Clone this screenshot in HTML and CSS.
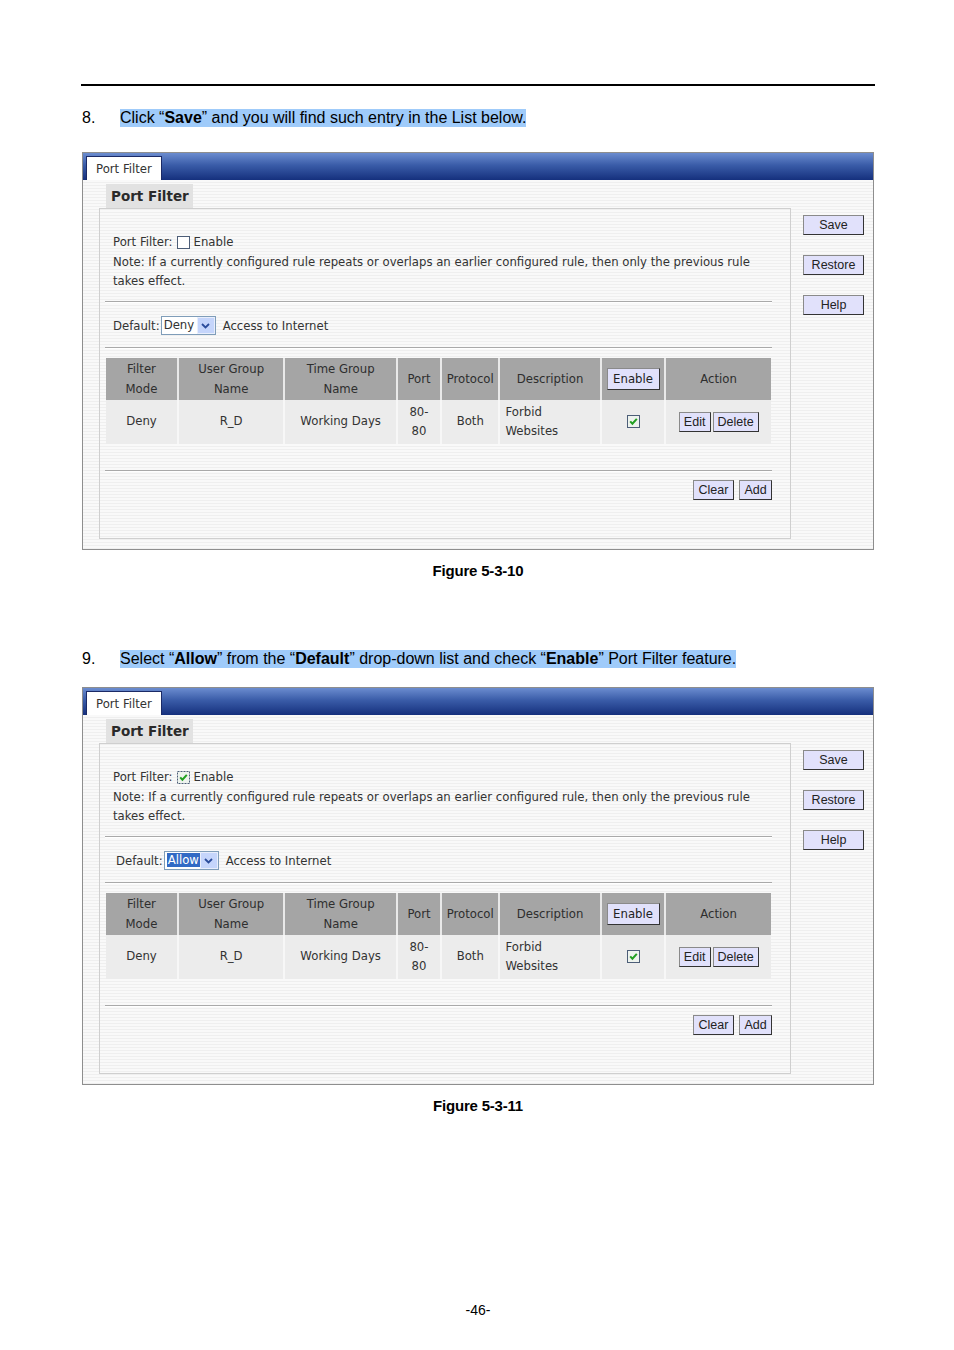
FILE: index.html
```html
<!DOCTYPE html>
<html lang="en">
<head>
  <meta charset="UTF-8" />
  <title>Port Filter - User Guide</title>
  <link rel="stylesheet" href="styles.css">
</head>
<body>
  <div class="page">
    <hr class="top-rule">

    <p class="step"><span class="num">8.</span><span class="hl">Click “<b>Save</b>” and you will find such entry in the List below.</span></p>

    <div class="panel">
      <div class="panel-head"><span class="tab">Port Filter</span></div>
      <div class="panel-body">
        <div class="subtab">Port Filter</div>
        <div class="main">
          <div class="box">
            <div class="intro">
              <div class="en-row">Port Filter:
                <svg class="chk" width="13" height="13" viewBox="0 0 13 13"><rect x="0.5" y="0.5" width="12" height="12" fill="#fff" stroke="#4d5e78"/></svg>
                Enable</div>
              <div>Note: If a currently configured rule repeats or overlaps an earlier configured rule, then only the previous rule takes effect.</div>
            </div>
            <hr class="sep">
            <div class="default-row">Default:
              <span class="select"><span class="val">Deny</span><span class="arrow"><svg width="9" height="6" viewBox="0 0 9 6"><path d="M1 1l3.5 3.5L8 1" fill="none" stroke="#2b4c9b" stroke-width="1.8"/></svg></span></span>
              Access to Internet</div>
            <hr class="sep sep-b">
            <table class="rules">
              <tr>
                <th class="c1">Filter<br>Mode</th>
                <th class="c2">User Group<br>Name</th>
                <th class="c3">Time Group<br>Name</th>
                <th class="c4">Port</th>
                <th class="c5">Protocol</th>
                <th class="c6">Description</th>
                <th class="c7"><span class="btn btn-enable">Enable</span></th>
                <th class="c8">Action</th>
              </tr>
              <tr>
                <td>Deny</td>
                <td>R_D</td>
                <td>Working Days</td>
                <td>80-<br>80</td>
                <td>Both</td>
                <td class="desc">Forbid<br>Websites</td>
                <td><svg class="chk" width="13" height="13" viewBox="0 0 13 13"><rect x="0.5" y="0.5" width="12" height="12" fill="#eef3ee" stroke="#4d5e78"/><path d="M3.2 6.4l2.2 2.3 4.4-4.9" fill="none" stroke="#22a022" stroke-width="2"/></svg></td>
                <td><span class="row-btns"><span class="btn btn-edit">Edit</span><span class="btn btn-del">Delete</span></span></td>
              </tr>
            </table>
            <hr class="sep sep-c">
            <div class="actions"><span class="btn btn-clear">Clear</span><span class="btn btn-add">Add</span></div>
          </div>
          <div class="side">
            <span class="btn btn-side">Save</span>
            <span class="btn btn-side">Restore</span>
            <span class="btn btn-side">Help</span>
          </div>
        </div>
      </div>
    </div>
    <p class="caption">Figure 5-3-10</p>

    <p class="step step-two"><span class="num">9.</span><span class="hl">Select “<b>Allow</b>” from the “<b>Default</b>” drop-down list and check “<b>Enable</b>” Port Filter feature.</span></p>

    <div class="panel panel-two">
      <div class="panel-head"><span class="tab">Port Filter</span></div>
      <div class="panel-body">
        <div class="subtab">Port Filter</div>
        <div class="main">
          <div class="box">
            <div class="intro">
              <div class="en-row">Port Filter:
                <svg class="chk" width="13" height="13" viewBox="0 0 13 13"><rect x="0.5" y="0.5" width="12" height="12" fill="#eef3ee" stroke="#4d5e78" stroke-dasharray="2 1"/><path d="M3.2 6.4l2.2 2.3 4.4-4.9" fill="none" stroke="#22a022" stroke-width="2"/></svg>
                Enable</div>
              <div>Note: If a currently configured rule repeats or overlaps an earlier configured rule, then only the previous rule takes effect.</div>
            </div>
            <hr class="sep">
            <div class="default-row shifted">Default:
              <span class="select"><span class="val"><span class="picked">Allow</span></span><span class="arrow"><svg width="9" height="6" viewBox="0 0 9 6"><path d="M1 1l3.5 3.5L8 1" fill="none" stroke="#2b4c9b" stroke-width="1.8"/></svg></span></span>
              Access to Internet</div>
            <hr class="sep sep-b">
            <table class="rules">
              <tr>
                <th class="c1">Filter<br>Mode</th>
                <th class="c2">User Group<br>Name</th>
                <th class="c3">Time Group<br>Name</th>
                <th class="c4">Port</th>
                <th class="c5">Protocol</th>
                <th class="c6">Description</th>
                <th class="c7"><span class="btn btn-enable">Enable</span></th>
                <th class="c8">Action</th>
              </tr>
              <tr>
                <td>Deny</td>
                <td>R_D</td>
                <td>Working Days</td>
                <td>80-<br>80</td>
                <td>Both</td>
                <td class="desc">Forbid<br>Websites</td>
                <td><svg class="chk" width="13" height="13" viewBox="0 0 13 13"><rect x="0.5" y="0.5" width="12" height="12" fill="#eef3ee" stroke="#4d5e78"/><path d="M3.2 6.4l2.2 2.3 4.4-4.9" fill="none" stroke="#22a022" stroke-width="2"/></svg></td>
                <td><span class="row-btns"><span class="btn btn-edit">Edit</span><span class="btn btn-del">Delete</span></span></td>
              </tr>
            </table>
            <hr class="sep sep-c">
            <div class="actions"><span class="btn btn-clear">Clear</span><span class="btn btn-add">Add</span></div>
          </div>
          <div class="side">
            <span class="btn btn-side">Save</span>
            <span class="btn btn-side">Restore</span>
            <span class="btn btn-side">Help</span>
          </div>
        </div>
      </div>
    </div>
    <p class="caption">Figure 5-3-11</p>

    <p class="page-num">-46-</p>
  </div>
</body>
</html>
```

FILE: styles.css
```css
body { margin: 0; background: #fff; color: #000; font-family: Arial, "Liberation Sans", sans-serif; }
.page { width: 794px; margin-left: 81px; padding-top: 84px; }
.top-rule { border: 0; border-top: 2px solid #000; margin: 0; }

.step { display: flex; margin: 23px 0 0; font-size: 16px; line-height: 18px; }
.step .num { width: 38px; padding-left: 1px; }
.hl { background: #9fcbfa; }
.step-two { margin-top: 70px; }

.caption { margin: 12px 0 0; text-align: center; font-weight: bold; font-size: 15px; line-height: 18px; letter-spacing: -0.2px; }
.page-num { margin: 187px 0 0; text-align: center; font-size: 14px; line-height: 16px; }

/* router ui panel */
.panel {
  width: 790px; margin: 25px 0 0 1px; border: 1px solid #8e8e8e;
  font-family: Tahoma, "DejaVu Sans", sans-serif; font-size: 11.7px; color: #333;
}
.panel-two { margin-top: 19px; }
.panel-head {
  height: 27px; box-sizing: border-box; padding: 3px 0 0 3px;
  display: flex; align-items: flex-end;
  background: linear-gradient(#6b8ccf, #3a5ca8 45%, #15307d);
}
.tab {
  height: 24px; box-sizing: border-box; padding: 0 9px;
  background: #fff; border: 1px solid #1b2a66; border-bottom: 0;
  line-height: 24px; color: #333;
}
.panel-body {
  padding: 4px 0 10px;
  background: repeating-linear-gradient(#f9f9f9 0 2px, #efefef 2px 3px);
}
.subtab {
  width: 87px; height: 24px; margin-left: 23px; box-sizing: border-box; padding-left: 5px;
  background: #e2e2e2; color: #2a2a2a;
  font-weight: bold; font-size: 13.5px; line-height: 24px;
}
.main { display: flex; }
.box {
  width: 692px; height: 331px; margin-left: 16px; box-sizing: border-box;
  padding: 0 18px 0 5px; border: 1px solid #cfcfcf;
}
.side { flex: 1; display: flex; flex-direction: column; align-items: flex-start; gap: 20px; padding: 7px 0 0 12px; }

.intro { padding: 24px 0 0 8px; line-height: 19.5px; }
.en-row { display: flex; align-items: center; gap: 4px; }
.chk { display: block; }
.sep { margin: 9px 0 0; border: 0; border-top: 1px solid #a9a9a9; border-bottom: 1px solid #fff; }
.sep-b { margin-top: 11px; }
.sep-c { margin-top: 26px; }

.default-row { display: flex; align-items: center; height: 20px; margin: 13px 0 0 8px; }
.default-row.shifted { margin-left: 11px; }
.select { display: flex; width: 55px; height: 19px; box-sizing: border-box; border: 1px solid #7f9db9; background: #fff; margin: 0 7px 0 1px; }
.select .val { flex: 1; padding-left: 2px; line-height: 17px; color: #333; }
.select .picked { background: #316ac5; color: #fff; padding: 0 1px; }
.select .arrow { width: 16px; display: flex; align-items: center; justify-content: center; background: #c5d5fb; border: 1px solid #e8eefc; }

.rules { margin: 9px 0 0 1px; width: 665px; border-collapse: collapse; color: #333; font-size: 11.7px; }
.rules th { height: 42px; padding: 0; background: #a5a5a5; color: #2e2e2e; font-weight: normal; line-height: 20px; border-left: 2px solid #e9e9e9; }
.rules td { height: 44px; padding: 0; background: #ececec; text-align: center; line-height: 19px; border-left: 2px solid #f7f7f7; }
.rules th:first-child, .rules td:first-child { border-left: 0; }
.rules td.desc { text-align: left; padding-left: 5px; }
.rules td .chk { margin: 0 auto; }
.c1 { width: 73px; }
.c2 { width: 108px; }
.c3 { width: 114px; }
.c4 { width: 43px; }
.c5 { width: 57px; }
.c6 { width: 101px; }
.c7 { width: 63px; }
.c8 { width: 106px; }

.btn {
  display: inline-block; box-sizing: border-box; height: 20px;
  border: 1px solid; border-color: #8a8a8a #333 #333 #8a8a8a;
  background: #e1e1fb; color: #222;
  font-family: Arial, "Liberation Sans", sans-serif; font-size: 12.5px; line-height: 18px; text-align: center;
}
.btn-side { width: 61px; }
.btn-enable { width: 53px; height: 22px; line-height: 20px; font-family: Tahoma, "DejaVu Sans", sans-serif; font-size: 11.7px; vertical-align: middle; }
.row-btns { display: inline-flex; gap: 2px; }
.btn-edit { width: 32px; }
.btn-del { width: 46px; }
.actions { display: flex; justify-content: flex-end; gap: 5px; margin-top: 8px; }
.btn-clear { width: 41px; }
.btn-add { width: 33px; }
```
